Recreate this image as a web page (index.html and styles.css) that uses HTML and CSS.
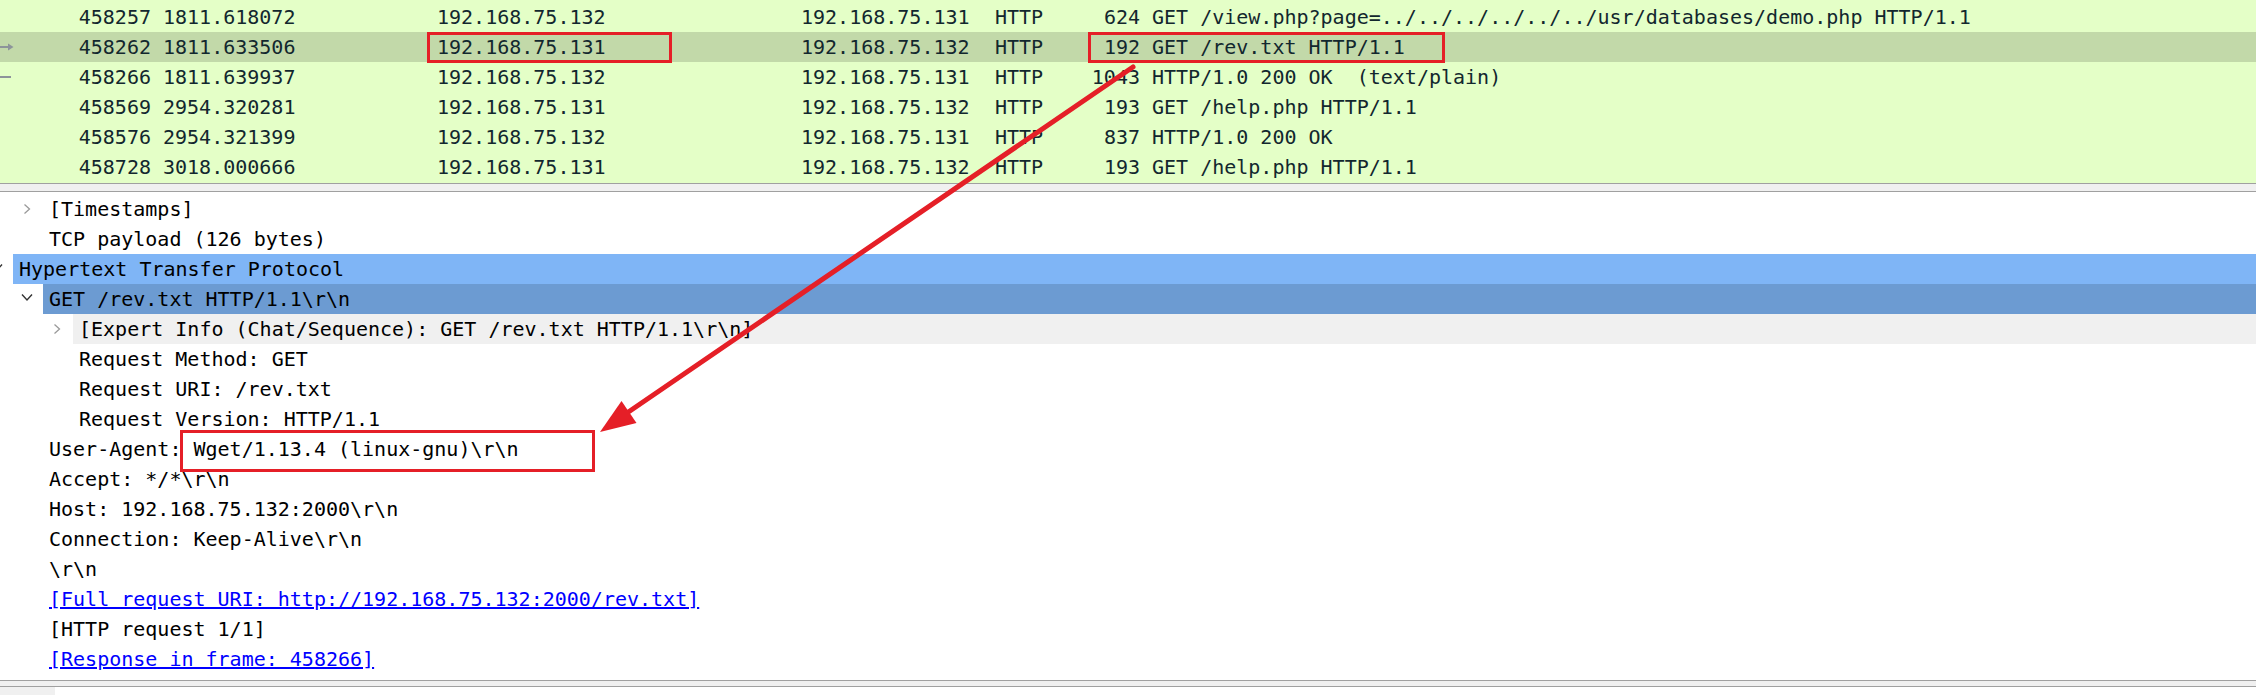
FILE: index.html
```html
<!DOCTYPE html>
<html>
<head>
<meta charset="utf-8">
<link rel="stylesheet" href="styles.css">
</head>
<body>
<div class="page">
  <div class="packet-list">
    <div class="prow">
      <div class="c-no"><span class="mark"></span><span>458257</span></div>
      <div class="c-time">1811.618072</div>
      <div class="c-src">192.168.75.132</div>
      <div class="c-dst">192.168.75.131</div>
      <div class="c-proto">HTTP</div>
      <div class="c-len">624</div>
      <div class="c-info">GET /view.php?page=../../../../../../usr/databases/demo.php HTTP/1.1</div>
    </div>
    <div class="prow selected">
      <div class="c-no"><svg class="mark" width="14" height="10" viewBox="0 0 14 10"><line x1="0" y1="5" x2="9" y2="5" stroke="#8d949a" stroke-width="2"/><polygon points="8,1.5 13.5,5 8,8.5" fill="#8d949a"/></svg><span>458262</span></div>
      <div class="c-time">1811.633506</div>
      <div class="c-src">192.168.75.131</div>
      <div class="c-dst">192.168.75.132</div>
      <div class="c-proto">HTTP</div>
      <div class="c-len">192</div>
      <div class="c-info">GET /rev.txt HTTP/1.1</div>
    </div>
    <div class="prow">
      <div class="c-no"><svg class="mark" width="14" height="10" viewBox="0 0 14 10"><line x1="0" y1="5" x2="11" y2="5" stroke="#8d949a" stroke-width="2"/></svg><span>458266</span></div>
      <div class="c-time">1811.639937</div>
      <div class="c-src">192.168.75.132</div>
      <div class="c-dst">192.168.75.131</div>
      <div class="c-proto">HTTP</div>
      <div class="c-len">1043</div>
      <div class="c-info">HTTP/1.0 200 OK  (text/plain)</div>
    </div>
    <div class="prow">
      <div class="c-no"><span class="mark"></span><span>458569</span></div>
      <div class="c-time">2954.320281</div>
      <div class="c-src">192.168.75.131</div>
      <div class="c-dst">192.168.75.132</div>
      <div class="c-proto">HTTP</div>
      <div class="c-len">193</div>
      <div class="c-info">GET /help.php HTTP/1.1</div>
    </div>
    <div class="prow">
      <div class="c-no"><span class="mark"></span><span>458576</span></div>
      <div class="c-time">2954.321399</div>
      <div class="c-src">192.168.75.132</div>
      <div class="c-dst">192.168.75.131</div>
      <div class="c-proto">HTTP</div>
      <div class="c-len">837</div>
      <div class="c-info">HTTP/1.0 200 OK</div>
    </div>
    <div class="prow">
      <div class="c-no"><span class="mark"></span><span>458728</span></div>
      <div class="c-time">3018.000666</div>
      <div class="c-src">192.168.75.131</div>
      <div class="c-dst">192.168.75.132</div>
      <div class="c-proto">HTTP</div>
      <div class="c-len">193</div>
      <div class="c-info">GET /help.php HTTP/1.1</div>
    </div>
  </div>

  <div class="splitter"></div>

  <div class="tree">
    <div class="trow">
      <div class="twisty l1"><svg width="12" height="12" viewBox="0 0 12 12"><polyline points="3.5,1.5 8.5,6 3.5,10.5" fill="none" stroke="#9a9a9a" stroke-width="1.3"/></svg></div>
      <div class="label">[Timestamps]</div>
    </div>
    <div class="trow">
      <div class="twisty l1"></div>
      <div class="label">TCP payload (126 bytes)</div>
    </div>
    <div class="trow">
      <div class="twisty l0"><svg width="12" height="12" viewBox="0 0 12 12"><polyline points="1,1.5 6,7 11,1.5" fill="none" stroke="#333" stroke-width="1.4"/></svg></div>
      <div class="label hl-proto">Hypertext Transfer Protocol</div>
    </div>
    <div class="trow">
      <div class="twisty l1"><svg width="12" height="12" viewBox="0 0 12 12"><polyline points="1,1.5 6,7 11,1.5" fill="none" stroke="#333" stroke-width="1.4"/></svg></div>
      <div class="label hl-field">GET /rev.txt HTTP/1.1\r\n</div>
    </div>
    <div class="trow">
      <div class="twisty l2"><svg width="12" height="12" viewBox="0 0 12 12"><polyline points="3.5,1.5 8.5,6 3.5,10.5" fill="none" stroke="#9a9a9a" stroke-width="1.3"/></svg></div>
      <div class="label hl-expert">[Expert Info (Chat/Sequence): GET /rev.txt HTTP/1.1\r\n]</div>
    </div>
    <div class="trow">
      <div class="twisty l2"></div>
      <div class="label">Request Method: GET</div>
    </div>
    <div class="trow">
      <div class="twisty l2"></div>
      <div class="label">Request URI: /rev.txt</div>
    </div>
    <div class="trow">
      <div class="twisty l2"></div>
      <div class="label">Request Version: HTTP/1.1</div>
    </div>
    <div class="trow">
      <div class="twisty l1"></div>
      <div class="label">User-Agent: Wget/1.13.4 (linux-gnu)\r\n</div>
    </div>
    <div class="trow">
      <div class="twisty l1"></div>
      <div class="label">Accept: */*\r\n</div>
    </div>
    <div class="trow">
      <div class="twisty l1"></div>
      <div class="label">Host: 192.168.75.132:2000\r\n</div>
    </div>
    <div class="trow">
      <div class="twisty l1"></div>
      <div class="label">Connection: Keep-Alive\r\n</div>
    </div>
    <div class="trow">
      <div class="twisty l1"></div>
      <div class="label">\r\n</div>
    </div>
    <div class="trow">
      <div class="twisty l1"></div>
      <div class="label"><span class="link">[Full request URI: http://192.168.75.132:2000/rev.txt]</span></div>
    </div>
    <div class="trow">
      <div class="twisty l1"></div>
      <div class="label">[HTTP request 1/1]</div>
    </div>
    <div class="trow">
      <div class="twisty l1"></div>
      <div class="label"><span class="link">[Response in frame: 458266]</span></div>
    </div>
  </div>

  <div class="gap"></div>
  <div class="splitter bottom"></div>
  <div class="status"><div class="status-left"></div></div>

  <div class="box box-src"></div>
  <div class="box box-info"></div>
  <div class="box box-ua"></div>
  <svg class="arrow" width="2256" height="695" viewBox="0 0 2256 695">
    <line x1="1133" y1="67" x2="624" y2="415" stroke="#e51f27" stroke-width="5" stroke-linecap="round"/>
    <polygon points="600,432 636.5,423 621.5,401" fill="#e51f27"/>
  </svg>
</div>
</body>
</html>
```

FILE: styles.css
```css
html, body {
  margin: 0;
  padding: 0;
  background: #ffffff;
}

body {
  width: 2256px;
  height: 695px;
  overflow: hidden;
  font-family: "DejaVu Sans Mono", "Liberation Mono", monospace;
  font-size: 20px;
  color: #000;
}

.page {
  position: relative;
  width: 2256px;
  height: 695px;
  overflow: hidden;
}

/* ---------- packet list ---------- */
.packet-list {
  background: #e4ffc7;
  padding: 2px 0 1px 0;
  color: #12272e;
}

.prow {
  display: grid;
  grid-template-columns: 151px 286px 364px 194px 66px 79px 1fr;
  height: 30px;
  line-height: 30px;
  white-space: pre;
}

.prow.selected {
  background: #c2d9a9;
}

.c-no {
  display: flex;
  justify-content: space-between;
  align-items: center;
}

.mark {
  display: block;
  width: 14px;
}

.c-time {
  padding-left: 12px;
}

.c-len {
  text-align: right;
}

.c-info {
  padding-left: 12px;
}

/* ---------- splitters ---------- */
.splitter {
  height: 7px;
  background: #f0f0f0;
  border-top: 1px solid #a0a0a0;
  border-bottom: 1px solid #a0a0a0;
}

.splitter.bottom {
  height: 5px;
}

.gap {
  height: 6px;
}

.status {
  height: 10px;
  background: #ffffff;
}

.status-left {
  width: 55px;
  height: 100%;
  background: #f0f0f0;
}

/* ---------- detail tree ---------- */
.tree {
  padding-top: 2px;
}

.trow {
  display: flex;
  height: 30px;
  line-height: 30px;
  white-space: pre;
}

.twisty {
  display: flex;
  justify-content: flex-end;
  align-items: center;
  padding-right: 10px;
  box-sizing: border-box;
  flex: none;
}

.twisty svg {
  display: block;
  flex: none;
}

.twisty.l0 { width: 13px; }
.twisty.l1 { width: 43px; }
.twisty.l2 { width: 73px; }

.label {
  flex: 1;
  padding-left: 6px;
}

.hl-proto { background: #7fb5f6; }
.hl-field { background: #6c9bd2; }
.hl-expert { background: #f0f0f0; }

.link {
  color: #0000ff;
  text-decoration: underline;
}

/* ---------- annotations ---------- */
.box {
  position: absolute;
  box-sizing: border-box;
  border: 3px solid #e51f27;
}

.box-src {
  left: 427px;
  top: 32px;
  width: 245px;
  height: 31px;
}

.box-info {
  left: 1088px;
  top: 32px;
  width: 357px;
  height: 31px;
}

.box-ua {
  left: 180px;
  top: 430px;
  width: 415px;
  height: 42px;
}

.arrow {
  position: absolute;
  left: 0;
  top: 0;
  pointer-events: none;
}
```
